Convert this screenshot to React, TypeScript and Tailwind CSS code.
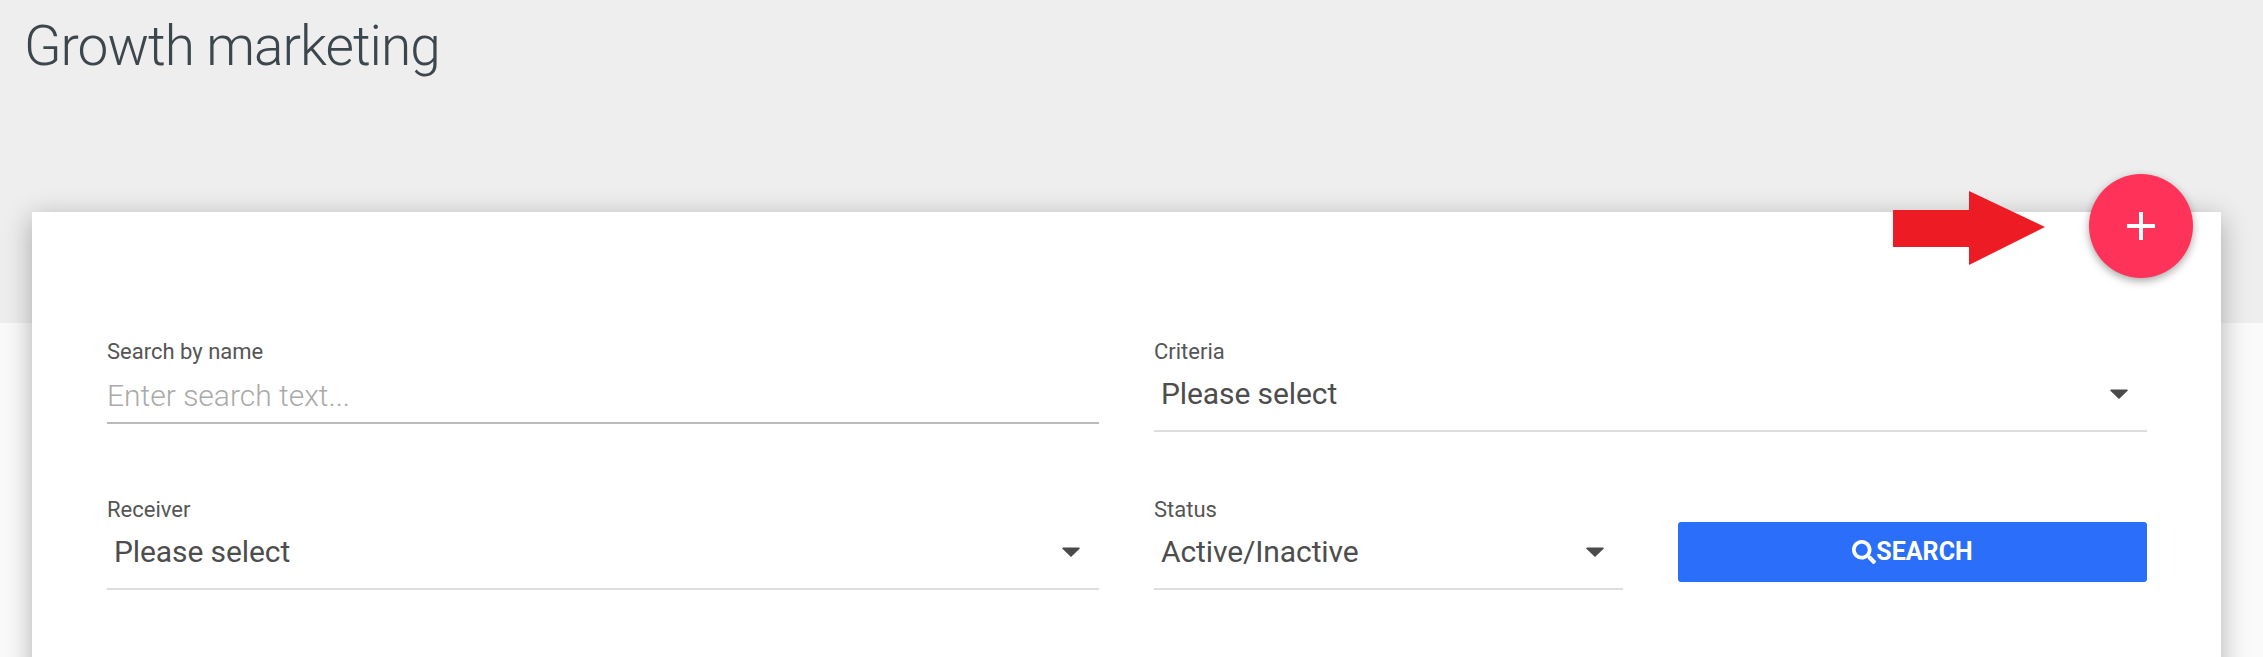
import { FaSearch } from 'react-icons/fa'

function Caret() {
  return (
    <svg width="18" height="10" viewBox="0 0 18 10" className="shrink-0">
      <path d="M1 0.5h16a.8.8 0 0 1 .6 1.3L9 10 .4 1.8A.8.8 0 0 1 1 .5z" fill="#4a4a4a" />
    </svg>
  )
}

function Select({ label, value, className = '' }: { label: string; value: string; className?: string }) {
  return (
    <div className={className}>
      <div className="text-[22px] leading-6 text-[#555]">{label}</div>
      <div className="mt-[9px] flex h-[59px] items-center justify-between border-b-2 border-[#ddd] pb-[16px] pl-[7px] pr-[19px]">
        <span className="text-[30px] leading-8 tracking-[-0.1px] text-[#4d4d4d]">{value}</span>
        <Caret />
      </div>
    </div>
  )
}

export default function App() {
  return (
    <div className="h-[657px] overflow-hidden bg-[#fafafa] font-['Roboto',sans-serif]">
      <div className="h-[323px] bg-[#eee] pl-[24px] pt-[12px]">
        <h1 className="text-[55px] font-light leading-[68px] tracking-[-1px] text-[#3c474d]">Growth marketing</h1>
      </div>
      <div className="relative ml-[32px] mr-[42px] mt-[-111px] h-[600px] bg-white px-[75px] pt-[128px] shadow-[0_6px_26px_rgba(0,0,0,0.3)]">
        <div className="grid grid-cols-[992px_993px] gap-x-[55px]">
          <div className="h-[158px]">
            <div className="text-[22px] leading-6 text-[#555]">Search by name</div>
            <div className="mt-[10px] h-[50px] border-b-2 border-[#bbb] pt-[6px] text-[30px] font-light leading-8 text-[#aaa]">
              Enter search text...
            </div>
          </div>
          <Select label="Criteria" value="Please select" />
          <Select label="Receiver" value="Please select" />
          <div className="flex items-start gap-[55px]">
            <Select label="Status" value="Active/Inactive" className="w-[469px]" />
            <button className="mt-[24px] flex h-[60px] flex-1 items-center justify-center rounded-[3px] bg-[#2a6ef9] text-[25px] font-bold text-white">
              <FaSearch className="size-[24px]" />
              SEARCH
            </button>
          </div>
        </div>
        <svg width="152" height="74" viewBox="0 0 152 74" className="absolute left-[1861px] top-[-21px]">
          <path d="M0 19h76V0l76 36L76 74V56H0z" fill="#ed1c24" />
        </svg>
        <button className="absolute left-[2057px] top-[-38px] flex size-[104px] items-center justify-center rounded-full bg-[#ff3259] shadow-[0_3px_8px_rgba(0,0,0,0.35)]">
          <svg width="28" height="28" viewBox="0 0 28 28">
            <path d="M12 0h4v12h12v4H16v12h-4V16H0v-4h12z" fill="#fff" />
          </svg>
        </button>
      </div>
    </div>
  )
}
